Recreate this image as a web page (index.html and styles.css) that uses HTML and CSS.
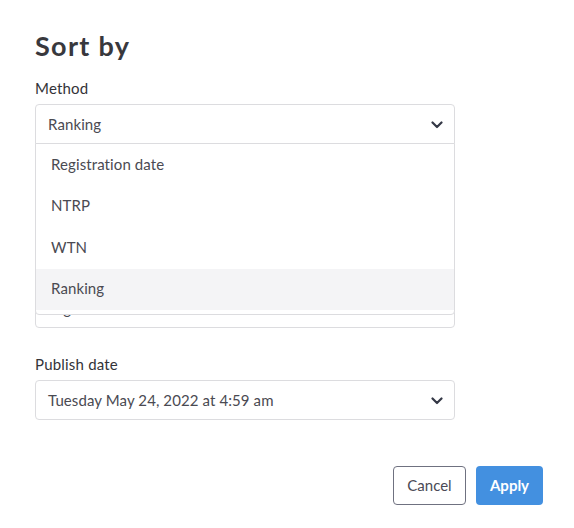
FILE: index.html
```html
<!DOCTYPE html>
<html lang="en">
<head>
<meta charset="utf-8">
<link rel="stylesheet" href="styles.css">
</head>
<body>
<div class="modal">
  <h1 class="title">Sort by</h1>
  <div class="fields">
    <div class="field field-open">
      <label class="label">Method</label>
      <div class="select-wrap">
        <div class="select select-open">
          <span class="value">Ranking</span>
          <svg class="chev" width="12" height="8" viewBox="0 0 12 8"><path d="M1.5 1.5 L6 6 L10.5 1.5" fill="none" stroke="#343846" stroke-width="2.2" stroke-linecap="round" stroke-linejoin="round"/></svg>
        </div>
        <ul class="menu">
          <li class="option">Registration date</li>
          <li class="option">NTRP</li>
          <li class="option">WTN</li>
          <li class="option option-active">Ranking</li>
        </ul>
      </div>
    </div>
    <div class="field field-covered">
      <div class="select">
        <span class="value">Highest</span>
      </div>
    </div>
    <div class="field">
      <label class="label">Publish date</label>
      <div class="select">
        <span class="value">Tuesday May 24, 2022 at 4:59 am</span>
        <svg class="chev" width="12" height="8" viewBox="0 0 12 8"><path d="M1.5 1.5 L6 6 L10.5 1.5" fill="none" stroke="#343846" stroke-width="2.2" stroke-linecap="round" stroke-linejoin="round"/></svg>
      </div>
    </div>
  </div>
  <div class="actions">
    <button class="btn btn-cancel">Cancel</button>
    <button class="btn btn-apply">Apply</button>
  </div>
</div>
</body>
</html>
```

FILE: styles.css
```css
* { box-sizing: border-box; }
html, body { margin: 0; padding: 0; background: #fff; }
body {
  font-family: Lato, "Open Sans", sans-serif;
  color: #3b3b42;
  width: 574px;
  height: 528px;
  overflow: hidden;
}
.modal {
  padding: 30px 31px 0 35px;
  width: 574px;
}
.title {
  margin: 0;
  font-size: 27px;
  line-height: 32px;
  font-weight: 700;
  color: #38383d;
  letter-spacing: 1.3px;
}
.fields {
  display: flex;
  flex-direction: column;
  gap: 26px;
  width: 420px;
  margin-top: 16px;
}
.field {
  display: flex;
  flex-direction: column;
  gap: 6px;
}
.field-open { position: relative; z-index: 2; }
.field-covered { margin-top: 118px; }
.label {
  font-size: 15px;
  line-height: 20px;
  color: #333338;
  letter-spacing: 0.2px;
}
.select-wrap { position: relative; }
.select {
  height: 40px;
  border: 1px solid #dcdcdf;
  border-radius: 4px;
  display: flex;
  align-items: center;
  justify-content: space-between;
  padding: 0 11px 0 12px;
  background: #fff;
}
.select-open {
  border-radius: 4px 4px 0 0;
}
.value {
  font-size: 15px;
  color: #4a4a52;
  letter-spacing: 0.1px;
}
.chev { display: block; margin-top: 1px; }
.menu {
  position: absolute;
  left: 0;
  right: 0;
  top: 39px;
  margin: 0;
  padding: 0 0 4px 0;
  list-style: none;
  background: #fff;
  border: 1px solid #dcdcdf;
  border-radius: 0 0 4px 4px;
}
.option {
  height: 41.5px;
  display: flex;
  align-items: center;
  padding-left: 15px;
  padding-bottom: 2px;
  font-size: 15px;
  color: #4a4a52;
  letter-spacing: 0.1px;
}
.option-active { background: #f4f4f6; }
.actions {
  display: flex;
  justify-content: flex-end;
  gap: 10px;
  margin-top: 46px;
}
.btn {
  height: 39px;
  border-radius: 4px;
  font-family: Lato, "Open Sans", sans-serif;
  font-size: 15px;
  padding: 0 0 2px 0;
  cursor: pointer;
}
.btn-cancel {
  width: 73px;
  background: #fff;
  border: 1px solid #6f7180;
  color: #4a4a55;
}
.btn-apply {
  width: 67px;
  background: #4390e0;
  border: none;
  color: #fff;
  font-weight: 700;
}
```
